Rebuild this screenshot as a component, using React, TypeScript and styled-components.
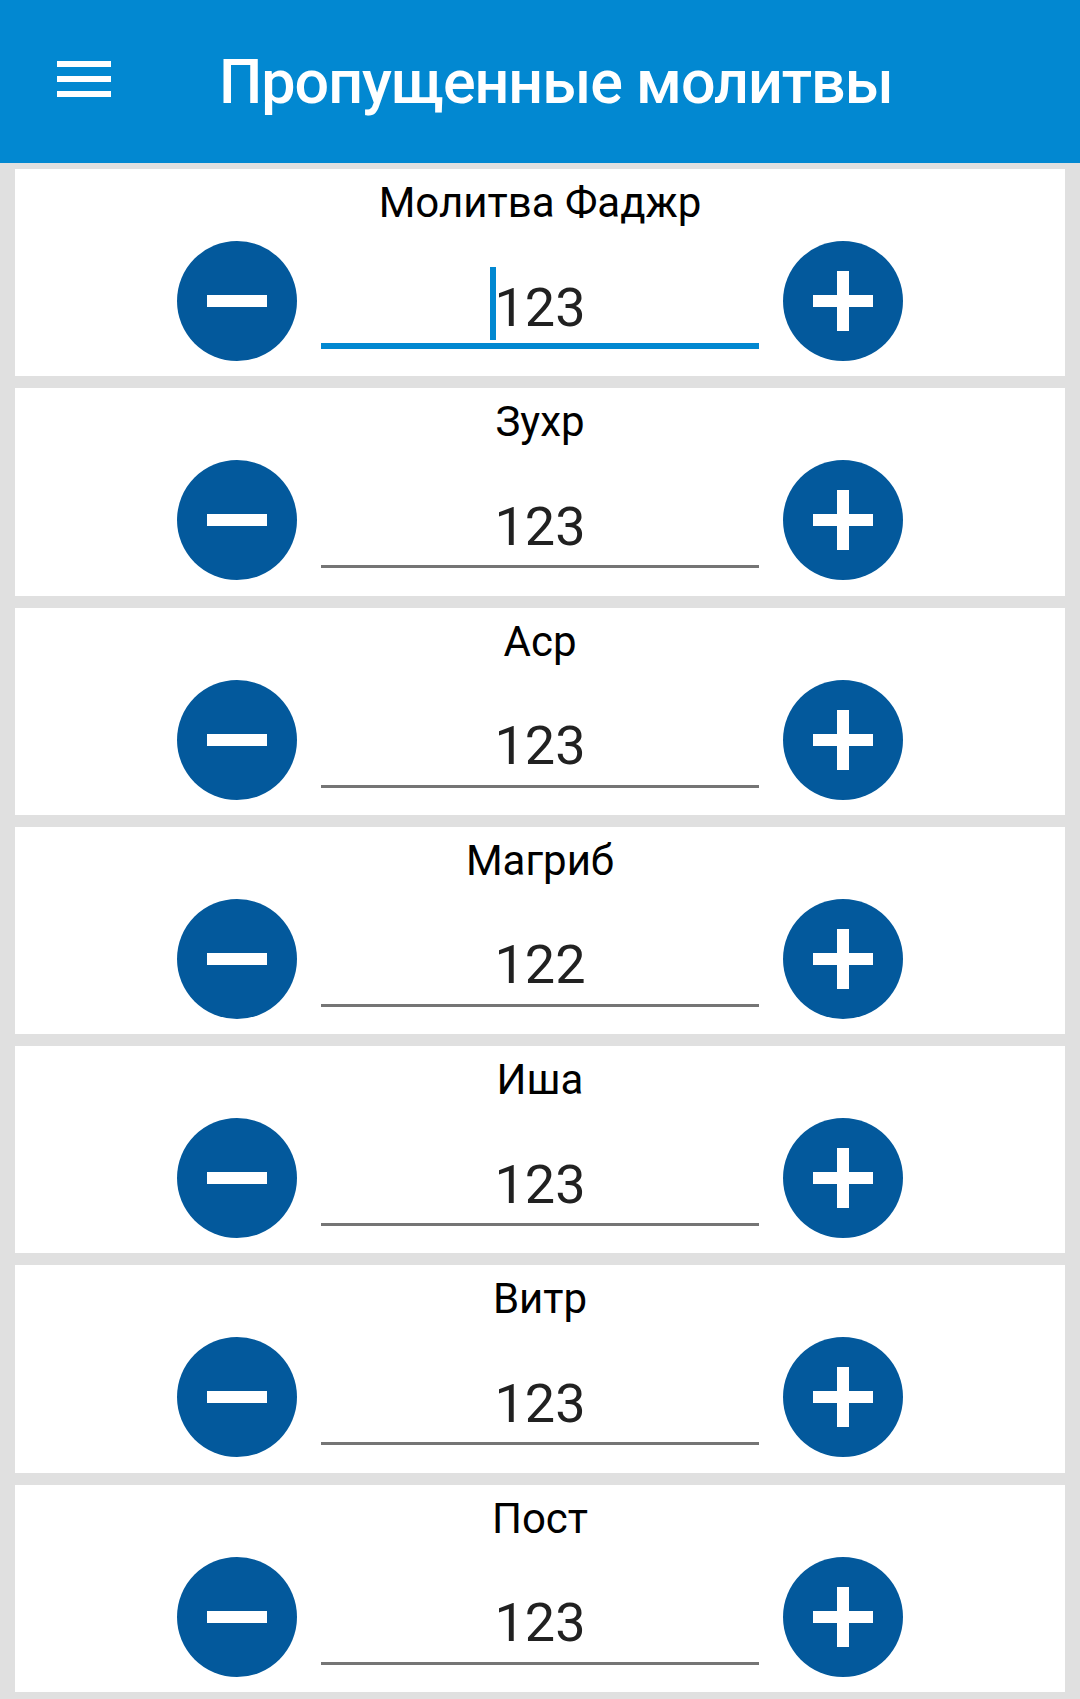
import { useState } from "react";
import styled, { createGlobalStyle } from "styled-components";

const GlobalStyle = createGlobalStyle`
  html, body {
    margin: 0;
    padding: 0;
    background: #e0e0e0;
    font-family: Roboto, "Noto Sans", sans-serif;
  }
`;

const Page = styled.div`
  width: 1080px;
  min-height: 1699px;
  background: #e0e0e0;
`;

const AppBar = styled.header`
  height: 163px;
  background: #0288d1;
  display: flex;
  align-items: center;
  padding-left: 57px;
  box-sizing: border-box;
`;

const MenuIcon = styled.svg`
  width: 54px;
  height: 36px;
  margin-bottom: 5px;
  flex-shrink: 0;
`;

const Title = styled.h1`
  margin: 0 0 0 108px;
  color: #ffffff;
  font-family: Roboto, sans-serif;
  font-weight: 500;
  font-size: 61px;
  letter-spacing: -1px;
  line-height: normal;
`;

const List = styled.main`
  display: flex;
  flex-direction: column;
  gap: 12px;
  padding: 6px 15px;
`;

const Card = styled.section`
  background: #ffffff;
  padding: 9px 0 15.3px;
  display: flex;
  flex-direction: column;
  align-items: center;
`;

const Label = styled.div`
  font-family: Roboto, sans-serif;
  font-size: 42px;
  line-height: 50px;
  color: #000000;
`;

const Row = styled.div`
  margin-top: 13px;
  display: flex;
  align-items: flex-end;
  gap: 24px;
`;

const RoundButton = styled.button`
  width: 120px;
  height: 120px;
  border-radius: 50%;
  border: none;
  padding: 0;
  background: #03599c;
  display: flex;
  align-items: center;
  justify-content: center;
  cursor: pointer;
`;

const Field = styled.div<{ $focused?: boolean }>`
  width: 438px;
  margin-bottom: 12px;
  padding-bottom: ${(p) => (p.$focused ? "3.5px" : "6.5px")};
  border-bottom: ${(p) => (p.$focused ? "6px solid #0288d1" : "3px solid #757575")};
  display: flex;
  justify-content: center;
  font-family: Roboto, sans-serif;
  font-size: 54px;
  line-height: 64px;
  color: #212121;
`;

const Value = styled.span`
  position: relative;
`;

const Caret = styled.span`
  position: absolute;
  left: -4px;
  top: -9px;
  width: 6px;
  height: 73px;
  background: #0288d1;
`;

const prayers = [
  { name: "Молитва Фаджр", count: 123 },
  { name: "Зухр", count: 123 },
  { name: "Аср", count: 123 },
  { name: "Магриб", count: 122 },
  { name: "Иша", count: 123 },
  { name: "Витр", count: 123 },
  { name: "Пост", count: 123 },
];

function Minus() {
  return (
    <svg width="60" height="12" viewBox="0 0 60 12">
      <rect x="0" y="0" width="60" height="12" fill="#fff" />
    </svg>
  );
}

function Plus() {
  return (
    <svg width="60" height="60" viewBox="0 0 60 60">
      <rect x="0" y="24" width="60" height="12" fill="#fff" />
      <rect x="24" y="0" width="12" height="60" fill="#fff" />
    </svg>
  );
}

export default function App() {
  const [counts, setCounts] = useState(prayers.map((p) => p.count));

  const change = (i: number, d: number) =>
    setCounts((c) => c.map((v, j) => (j === i ? Math.max(0, v + d) : v)));

  return (
    <Page>
      <GlobalStyle />
      <AppBar>
        <MenuIcon viewBox="0 0 54 36">
          <rect x="0" y="0" width="54" height="6" fill="#fff" />
          <rect x="0" y="15" width="54" height="6" fill="#fff" />
          <rect x="0" y="30" width="54" height="6" fill="#fff" />
        </MenuIcon>
        <Title>Пропущенные молитвы</Title>
      </AppBar>
      <List>
        {prayers.map((p, i) => (
          <Card key={p.name}>
            <Label>{p.name}</Label>
            <Row>
              <RoundButton aria-label="minus" onClick={() => change(i, -1)}>
                <Minus />
              </RoundButton>
              <Field $focused={i === 0}>
                <Value>
                  {i === 0 && <Caret />}
                  {counts[i]}
                </Value>
              </Field>
              <RoundButton aria-label="plus" onClick={() => change(i, 1)}>
                <Plus />
              </RoundButton>
            </Row>
          </Card>
        ))}
      </List>
    </Page>
  );
}
